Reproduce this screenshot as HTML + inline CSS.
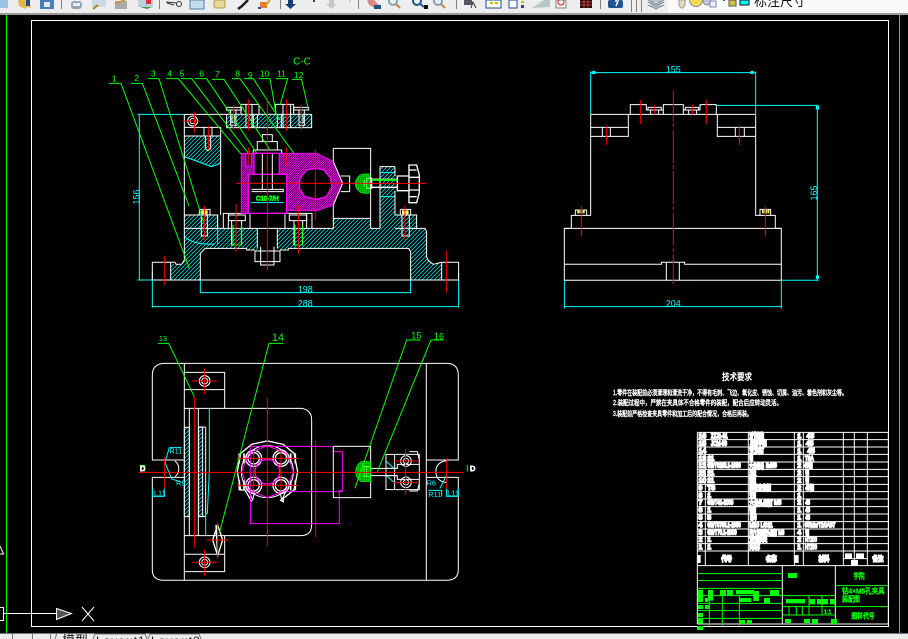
<!DOCTYPE html>
<html><head><meta charset="utf-8"><style>
html,body{margin:0;padding:0;background:#000;width:908px;height:639px;overflow:hidden}
svg{display:block}
text{font-family:"Liberation Sans","Noto Sans CJK SC",sans-serif}
</style></head><body>
<svg width="908" height="639" viewBox="0 0 908 639" xmlns="http://www.w3.org/2000/svg">
<defs>
<pattern id="h" width="12" height="12" patternUnits="userSpaceOnUse"><path d="M0 12L12 0M-3 3L3 -3M9 15L15 9" stroke="#0ff" stroke-width="2"/></pattern>
<pattern id="m" width="7" height="7" patternUnits="userSpaceOnUse"><rect width="7" height="7" fill="#000"/><path d="M0 7L7 0M-2 2L2 -2M5 9L9 5" stroke="#f0f" stroke-width="3"/></pattern>
<pattern id="g" width="6" height="6" patternUnits="userSpaceOnUse"><path d="M0 6L6 0M0 0L6 6" stroke="#0f0" stroke-width="2"/></pattern>
</defs>
<rect width="908" height="639" fill="#000"/>

<!-- toolbar -->
<rect width="908" height="13" fill="#eeeeee"/>
<rect y="13" width="908" height="2" fill="#9a9a9a"/>
<rect x="668" y="0" width="240" height="13" fill="#fafafa"/>
<g fill="none" stroke="#808080">
<path d="M61.500 0V9M159.500 0V9M280.500 0V9M358.500 0V9M456.500 0V9M600.500 0V9M631.500 0V12M636.500 0V12M641.500 0V12"/>
</g>
<rect x="0" y="0" width="8" height="8" fill="#9cc3e0"/>
<path d="M18 0h11l2 8-4-1-2 2-6-3z" fill="#e3b64f"/><path d="M26 0h4v6h-4z" fill="#1f4f8e"/>
<rect x="40" y="0" width="14" height="9" fill="#4a7fb5"/><rect x="44" y="2" width="6" height="5" fill="#dfeaf4"/>
<rect x="71" y="1" width="11" height="8" rx="3" fill="#90a4b8"/><rect x="73" y="3" width="7" height="3" fill="#eee"/>
<rect x="92" y="0" width="14" height="7" fill="#c9d9e6"/><path d="M93 9l5-4" stroke="#b57a2a" stroke-width="2"/>
<rect x="115" y="1" width="12" height="8" fill="#aaa"/><path d="M115 4l10-4" stroke="#c99a3a" stroke-width="2"/>
<rect x="138" y="0" width="15" height="7" fill="#b9cfe0"/><path d="M140 7l7 2 5-2" fill="#3d9a45"/><rect x="146" y="0" width="5" height="4" fill="#d33"/>
<path d="M166 2l11 1M167 3l7 2" stroke="#333" fill="none"/><circle cx="179" cy="4" r="2.500" fill="none" stroke="#334"/>
<rect x="190" y="0" width="14" height="9" fill="#c5dcef" stroke="#4a7fb5"/>
<rect x="214" y="0" width="11" height="8" rx="2" fill="#e9d9a0" stroke="#b8963a"/>
<path d="M238 9l4-3 6-6" stroke="#222" stroke-width="2.500" fill="none"/>
<rect x="260" y="2" width="7" height="6" fill="#f07a30"/><rect x="258" y="7" width="3" height="2" fill="#1c4fb8"/><path d="M266 5l4-5" stroke="#c9a832" stroke-width="2"/>
<path d="M288 0h5v4h3l-5.500 5-5.500-5h3z" fill="#143f78"/><rect x="313" y="0" width="2" height="2" fill="#143f78"/>
<path d="M329 0h5v4h3l-5.500 5-5.500-5h3z" fill="#c8c8c8"/><rect x="349" y="0" width="2" height="2" fill="#ccc"/>
<path d="M367 0h7l5 5-4 3-6-3z" fill="#d98a8a"/><rect x="374" y="5" width="7" height="4" fill="#1f5590"/>
<g fill="none" stroke-width="2"><circle cx="393" cy="1" r="4" stroke="#7da5c4"/><path d="M396 4l4 4" stroke="#c58a3a"/><circle cx="417" cy="1" r="4" stroke="#1f5590"/><path d="M420 4l4 3" stroke="#1f5590"/><circle cx="438" cy="1" r="4" stroke="#7da5c4"/><path d="M441 4l4 4" stroke="#c58a3a"/></g>
<rect x="424" y="5" width="4" height="4" fill="#111"/>
<rect x="464" y="0" width="8" height="5" fill="#556"/><path d="M471 8l2-6 3 6" fill="none" stroke="#334"/>
<rect x="486" y="0" width="15" height="8" fill="#fff" stroke="#1f4f8e"/><rect x="490" y="2" width="3" height="2" fill="#d8b400"/><rect x="495" y="2" width="3" height="2" fill="#d8b400"/>
<rect x="509" y="0" width="8" height="8" fill="#fff" stroke="#1f4f8e"/><rect x="521" y="1" width="3" height="2" fill="#d8b400"/><rect x="521" y="5" width="3" height="3" fill="#1f4f8e"/>
<path d="M532 8l12-8h6v7z" fill="#b8c6c8"/>
<rect x="556" y="0" width="10" height="8" fill="#eee" stroke="#888"/><circle cx="561" cy="2" r="3" fill="none" stroke="#d22"/>
<rect x="580" y="0" width="12" height="8" fill="#111"/><path d="M580 2h12M580 5h12M584 0v8M588 0v8" stroke="#d33"/>
<rect x="608" y="0" width="15" height="8" rx="2" fill="#1f5590"/><path d="M615 1h3l-2 5" stroke="#fff" fill="none" stroke-width="1.500"/>
<path d="M648 2l8 4 8-4M648 5l8 4 8-4M648 0l8-2 8 2-8 4z" fill="#b5c2cc" stroke="#7f8f9c"/>
<path d="M679 0v5l2 3h2l2-3V0z" fill="#e0dfb8" stroke="#999"/>
<circle cx="696" cy="0" r="6.500" fill="#f4dc50" stroke="#7d8ea8"/>
<circle cx="707" cy="1" r="4" fill="#b9c8d8" stroke="#888"/><rect x="710" y="1" width="6" height="6" fill="#eef" stroke="#7d8ea8"/>
<rect x="729" y="0" width="7" height="6" fill="#d2c23a" stroke="#555"/><rect x="723" y="0" width="2" height="1" fill="#555"/>
<rect x="740" y="0" width="9" height="5" fill="#0ff" stroke="#111"/>
<text x="754" y="6" font-size="13" fill="#111">标注尺寸</text>

<!-- model space edges -->
<path d="M6.500 15V633M899.500 15V633" stroke="#0f0"/>
<rect x="31.500" y="20.500" width="857" height="606" fill="none" stroke="#fff"/>

<!-- UCS -->
<g fill="none" stroke="#fff">
<path d="M0 554l3.500 0-3.500-8" />
<path d="M0 607.500h3.500v13H0M4 613.500h53"/>
<path d="M56.500 608.500l15 5-15 6z" fill="#555"/>
<path d="M82 621l12-14M82 607l12 14"/>
</g>

<!-- FRONT VIEW -->
<g transform="translate(100 50) scale(.3333)" fill="none" stroke-width="3" stroke="#fff">
<path d="M212 690V642L228 643H245L253 630V535H472V600H440V595H315L301 610V690Z" fill="url(#h)" stroke="none"/>
<path d="M532 535H700V505H812V535H840V350H885V495H950V535H975L980 545V620L1000 643L1025 637V690H932V605L925 595H565V600H532Z" fill="url(#h)" stroke="none"/>
<rect x="812" y="350" width="28" height="185" fill="#000" stroke="none"/>
<path d="M253 495H353V535H253ZM253 258H362V340L335 350L253 320ZM380 193H635V232H380Z" fill="url(#h)" stroke="none"/>
<rect x="886" y="480" width="70" height="15" fill="#000" stroke="none"/>
<!-- cyan bits -->
<g stroke="#0ff">
<path d="M253 320L335 350L362 340M253 560C270 575 300 585 345 582M353 495V582M842 368H885M842 440H885"/>
<path d="M112 193H253M112 690H212M118 193V690M301 690V730M932 690V730M301 728H932M157 665V773M1076 665V773M157 770H1076"/>
<path d="M460 458H552"/>
</g>
<g fill="#0ff" stroke="none" font-size="27" text-anchor="middle">
<text x="616" y="727">198</text><text x="616" y="769">288</text>
<text transform="translate(118 441) rotate(-90)">156</text>
</g>
<!-- white outlines -->
<path d="M157 690V637H225L228 643H245L253 630V535H700V505H812V535H840M885 535H975L980 545V620L985 632L1000 643L1025 637H1076V690H157M212 637V690M1025 637V690"/>
<path d="M301 690V610L315 595H440V600H465M540 600H565V595H925L932 605V690"/>
<path d="M253 193V535M362 232V495M253 193H380M253 232H362M253 258H362M253 495H353V535M885 495H950V535"/>
<path d="M700 295H812V505M700 295V505M722 378H749V425H722M840 350V535M885 350V378M885 422V495M840 350H885"/>
<circle cx="278" cy="213" r="15"/><circle cx="278" cy="213" r="8"/>
<path d="M312 232V258M336 232V258M316 258V296L324 302L332 296V258"/>
<rect x="380" y="193" width="255" height="40"/>
<path d="M423 193V163H477V193M438 163V233M456 163V233M527 193V163H581V193M549 163V233M572 163V233M460 193V233M472 193V233M532 193V233M544 193V233"/>
<path d="M379 172H424V180H379ZM581 172H626V180H581ZM392 180V226H408V180M597 180V226H613V180M396 198H404V218H396ZM601 198H609V218H601"/>
<path d="M487 275V254H517V275M472 300V275H532V300M460 310V300H545V310M487 310V420M517 310V420M455 418H550V425H455"/>
<path d="M370 535V490H450V535M555 535V490H636V535M385 490V535M620 490V535M450 490V535M472 535V595M532 535V595M555 490V535"/>
<path d="M465 603H540V635H465ZM482 590V645H522V590"/>
<path d="M386 495H436V512H386ZM568 495H620V512H568ZM395 512V585H425V512M582 512V585H608V512"/>
<path d="M298 478H330V495M298 478V495M304 495V558H322V495M901 478H932V495M901 478V495M906 495V558H928V495"/>
<rect x="303" y="481" width="20" height="12" fill="#ff6" stroke="none"/><rect x="906" y="481" width="20" height="12" fill="#ff6" stroke="none"/>
<path d="M892 378H927V422H892ZM927 345H950L958 375V428L950 458H927ZM927 360H950M927 382H958M927 420H958M927 440H950M815 388H892M815 412H892M800 385H815V415H800ZM793 390V410" stroke-width="4"/>
<!-- green -->
<path d="M795 372A28 28 0 0 0 795 430H808V372Z" fill="url(#g)" stroke="#0f0" stroke-width="2"/>
<g stroke="#0f0">
<path d="M815 390H892" stroke-width="5"/>
<path d="M27 100H63L268 655M93 100H127L267 468M144 86H177L313 525M198 86H235L430 320M243 86H275L510 395M285 86H320L545 420M336 88H372L510 300M396 86H420L600 335M432 86H460L540 210M477 86H510L528 190M528 86H563L540 165M576 88H605L625 178"/>
<path d="M399 525V585M424 525V585M585 525V585M607 525V585M398 585H424M583 585H607"/>
</g>
<g fill="#0f0" stroke="none" font-size="26" text-anchor="middle">
<text x="606" y="44" font-size="30">C-C</text>
<text x="43" y="95">1</text><text x="110" y="93">2</text><text x="160" y="80">3</text><text x="209" y="80">4</text><text x="246" y="80">5</text><text x="305" y="80">6</text><text x="352" y="81">7</text><text x="413" y="80">8</text><text x="451" y="84">9</text><text x="494" y="80">10</text><text x="544" y="80">11</text><text x="596" y="84">12</text>
</g>
<!-- magenta part -->
<path d="M424 310H650L700 335L728 400L700 465L650 482H555V490H424Z" fill="url(#m)" stroke="#f0f"/>
<path d="M646 355L672 360L692 385L696 410L680 440L650 448L615 440L598 415L600 385L620 360Z" fill="#000" stroke="#f0f" stroke-width="4"/>
<rect x="445" y="373" width="115" height="117" fill="#000" stroke="#f0f" stroke-width="4"/>
<rect x="462" y="310" width="76" height="63" fill="#000" stroke="#f0f" stroke-width="4"/>
<rect x="438" y="310" width="16" height="38" fill="#000" stroke="#f0f" stroke-width="3"/>
<path d="M487 312V373M517 312V373M487 373V420M517 373V420M455 418H550V425H455"/>
<path d="M452 458H552" stroke="#0ff"/>
<text x="502" y="451" font-size="20" fill="#0f0" stroke="#0f0" text-anchor="middle" textLength="68" lengthAdjust="spacingAndGlyphs">C10-7/H</text>
<path d="M700 335L728 400L700 465" stroke="#fff"/>
<!-- red -->
<g stroke="#f00">
<path d="M193 617V705M1039 603V728M502 145V660M408 400H980M646 300V510M283 187V248M247 213H300M325 228V300M313 468V570M408 462V605M595 465V612M915 465V570M445 148V242M559 148V242M401 165V240M604 165V240M445 292V345M559 292V345"/>
</g>
</g>

<!-- SIDE VIEW -->
<g transform="translate(540 50) scale(.3333)" fill="none" stroke-width="3" stroke="#fff">
<path d="M152 193H647M152 193V496H94V535H73V691H724V535H706V496H647V193"/>
<path d="M73 535H724M73 643H364V637H434V643H724M379 637V691M418 637V691"/>
<path d="M265 193V259H152M152 232H265M187 232V259M211 232V259M532 193V259H647M532 232H647M586 232V259M613 232V259"/>
<path d="M271 193V164H319V180H370V164H430V193M430 180H480V164H529V193M324 172H364V180H324ZM436 172H476V180H436ZM332 180V193M356 180V193M446 180V193M470 180V193M370 164V193" />
<path d="M106 496V480H140V496M660 496V478H692V496"/>
<rect x="112" y="479" width="22" height="11" fill="#ff6" stroke="none"/><rect x="666" y="479" width="22" height="11" fill="#ff6" stroke="none"/>
<path d="M120 479V490M128 479V490M672 479V490M682 479V490" stroke="#666"/>
<g stroke="#0ff">
<path d="M152 68H647M152 64V193M647 64V202M528 166H836M832 166V691M724 691H836M73 691V776M724 691V776M73 770H724"/>
<path d="M158 64h7v7h-7zM633 64h7v7h-7zM829 170h7v7h-7zM829 678h7v7h-7z" fill="#0ff"/>
</g>
<g fill="#0ff" stroke="none" font-size="27" text-anchor="middle">
<text x="400" y="67">155</text><text x="400" y="769">204</text>
<text transform="translate(831 429) rotate(-90)">165</text>
</g>
<g stroke="#f00">
<path d="M400 123V213M400 219V231M400 240V340M400 345V357M400 363V462M400 468V480M400 489V585M400 594V606M400 612V702M301 150V222M499 150V222M343 165V193M457 165V193M199 228V285M598 228V285M124 468V558M676 468V558"/>
</g>
</g>

<!-- TOP VIEW -->
<g transform="translate(130 325) scale(.3333)" fill="none" stroke-width="3" stroke="#fff">
<path d="M163 405H67V150Q67 118 100 115H955Q985 118 985 150V405H889M889 457H985V735Q985 765 950 766H100Q67 765 67 735V457H163"/>
<path d="M163 115V766M889 115V766"/>
<path d="M163 142H284V250M163 194H284M163 740H284V632M163 688H284"/>
<path d="M163 250H515Q545 255 545 285V600Q545 630 515 632H163"/>
<path d="M178 250V632M205 250V632M227 306V574M206 306H227M206 574H227"/>
<rect x="163" y="307" width="15" height="268" fill="url(#h)" stroke="#fff"/>
<rect x="206" y="307" width="12" height="268" fill="url(#h)" stroke="#fff"/>
<path d="M238 250V440L232 565H227V632" stroke="#0ff"/>
<circle cx="224" cy="168" r="16"/><circle cx="224" cy="168" r="9"/><circle cx="224" cy="712" r="16"/><circle cx="224" cy="712" r="9"/>
<path d="M135 408A30 30 0 0 1 135 455M918 440A30 30 0 0 1 950 408M918 440A30 30 0 0 0 950 472"/>
<path d="M263 600L248 645L263 692L278 645ZM258 600L263 692" stroke-width="4"/>
<!-- central flange -->
<path d="M322 440L332 385L365 358L412 348L460 358L492 385L503 440L492 495L460 520V530L450 525M365 530L345 495H332L322 440" stroke-width="4"/>
<circle cx="412" cy="440" r="78"/>
<g stroke-width="4"><circle cx="371" cy="400" r="17"/><circle cx="453" cy="400" r="17"/><circle cx="371" cy="481" r="17"/><circle cx="453" cy="481" r="17"/><circle cx="371" cy="400" r="24"/><circle cx="453" cy="400" r="24"/><circle cx="371" cy="481" r="24"/><circle cx="453" cy="481" r="24"/></g>
<g stroke-width="5"><path d="M328 385V415M342 385V415M482 385V415M496 385V415M328 466V496M342 466V496M482 466V496M496 466V496"/></g>
<path d="M355 495L368 525L374 500M470 495L455 525L450 500" stroke-width="3"/>
<g stroke="#f0f" stroke-width="3">
<path d="M361 364H610V380H637V497H628V596H361ZM405 364H628M470 500H637"/>
<path d="M412 362L470 385L490 440L470 495L412 518L355 495L335 440L355 385Z"/>
<circle cx="412" cy="440" r="37" stroke-width="4"/>
</g>
<rect x="610" y="364" width="112" height="154"/>
<path d="M722 430H800M722 452H800M702 425H722V455H702ZM710 425V455"/>
<path d="M694 410A35 35 0 0 0 694 470H722V410Z" fill="url(#g)" stroke="#0f0" stroke-width="2"/>
<path d="M768 388H868V494H768ZM794 388V494M768 430H802V418H868M768 452H802V463H868M838 380H862L868 405V475L862 498H838"/>
<circle cx="828" cy="408" r="16"/><circle cx="828" cy="408" r="8"/><circle cx="828" cy="472" r="16"/><circle cx="828" cy="472" r="8"/>
<path d="M770 410L792 430M770 452L792 472" stroke="#0ff"/>
<g stroke="#0f0">
<path d="M84 55H116L193 215M417 55H460M417 55L268 625M830 45H872M830 45L675 490M903 45H940M903 45L742 440"/>
</g>
<g fill="#0f0" stroke="none" text-anchor="middle">
<text x="99" y="48" font-size="22">13</text><text x="444" y="48" font-size="32">14</text><text x="859" y="40" font-size="27">15</text><text x="927" y="44" font-size="27">16</text>
</g>
<g stroke="#0ff">
<path d="M118 368H155M118 368L105 412L125 462L150 470M68 490V514H103V490M985 490V514H950V490M930 490L950 450M895 496H935V514"/>
</g>
<g fill="#0ff" stroke="none" font-size="22">
<text x="118" y="385">R11</text><text x="138" y="482">R6</text><text x="72" y="512">L11</text><text x="890" y="482">R6</text><text x="895" y="516">R11</text><text x="952" y="512">L11</text>
</g>
<path d="M29 421H44V440M1012 420V440" stroke="#0f0"/>
<text x="30" y="438" fill="#0f0" font-size="22">D</text><text x="1020" y="438" fill="#0f0" font-size="22">D</text>
<g stroke="#f00">
<path d="M25 442H1002M193 215V668M412 220V662M557 348V636M104 395V490M950 400V490M223 132V207M186 168H262M223 675V752M186 712H262M263 595V700M230 645H296"/>
<path d="M371 378V500M453 378V500M320 400H505M320 481H505M827 372V508M790 408H865M790 472H865" />
</g>
</g>

<!-- TECH TEXT -->
<g fill="#fff" stroke="#fff" stroke-width=".4">
<text x="722" y="380" font-size="9" textLength="30" lengthAdjust="spacingAndGlyphs">技术要求</text>
<text x="613" y="395" font-size="7" textLength="234" lengthAdjust="spacingAndGlyphs">1.零件在装配前必须清理和清洗干净，不得有毛刺、飞边、氧化皮、锈蚀、切屑、油污、着色剂和灰尘等。</text>
<text x="613" y="405" font-size="7" textLength="169" lengthAdjust="spacingAndGlyphs">2.装配过程中，严禁在夹具体不合格零件的装配，配合后应转动灵活。</text>
<text x="613" y="416" font-size="7" textLength="139" lengthAdjust="spacingAndGlyphs">3.装配前严格检查夹具零件和加工后的配合情况，合格后再装。</text>
</g>

<!-- PARTS TABLE -->
<g transform="translate(690 425) scale(.3333)" fill="none" stroke="#fff" stroke-width="3">
<path d="M22 22H595M22 44H595M22 66H595M22 88H595M22 111H595M22 133H595M22 155H595M22 178H595M22 200H595M22 222H595M22 245H595M22 267H595M22 290H595M22 312H595M22 334H595M22 356H595M22 378H595M22 422H595"/>
<path d="M22 22V597M46 22V422M175 22V422M313 22V422M340 22V422M460 22V422M493 22V422M532 22V422M595 22V597M22 597H595"/>
<path d="M277 422V597M436 422V597"/>
<g fill="#fff" stroke="#fff" stroke-width="5" font-size="20">
<text x="26" y="39">16</text><text x="63" y="39" textLength="50" lengthAdjust="spacingAndGlyphs">ZZJ1-81</text><text x="178" y="39" textLength="44" lengthAdjust="spacingAndGlyphs">活节螺栓</text><text x="322" y="39">1</text><text x="350" y="39">45</text>
<text x="26" y="61">15</text><text x="63" y="61" textLength="48" lengthAdjust="spacingAndGlyphs">JCM-59</text><text x="180" y="61" textLength="50" lengthAdjust="spacingAndGlyphs">星形手把</text><text x="322" y="61">1</text><text x="348" y="61">45</text>
<text x="26" y="84">14</text><text x="178" y="84" textLength="44" lengthAdjust="spacingAndGlyphs">支承钉</text><text x="322" y="84">1</text><text x="352" y="84">45</text>
<text x="26" y="106">13</text><text x="52" y="106">11</text><text x="178" y="106" textLength="11" lengthAdjust="spacingAndGlyphs">销</text><text x="322" y="106">1</text><text x="345" y="106" textLength="26" lengthAdjust="spacingAndGlyphs">T8A</text>
<text x="26" y="128">12</text><text x="52" y="128" textLength="100" lengthAdjust="spacingAndGlyphs">GB/T6183.1-1986</text><text x="178" y="130" textLength="44" lengthAdjust="spacingAndGlyphs">六角螺母</text><text x="228" y="128" textLength="32" lengthAdjust="spacingAndGlyphs">M6</text><text x="322" y="128">2</text><text x="342" y="128" textLength="26" lengthAdjust="spacingAndGlyphs">45钢</text>
<text x="26" y="150">11</text><text x="52" y="150">11</text><text x="178" y="150" textLength="21" lengthAdjust="spacingAndGlyphs">压板</text><text x="322" y="150">2</text><text x="346" y="150" textLength="11" lengthAdjust="spacingAndGlyphs">钢</text>
<text x="26" y="172">10</text><text x="52" y="172">11</text><text x="178" y="172" textLength="20" lengthAdjust="spacingAndGlyphs">垫圈</text><text x="322" y="172">2</text><text x="346" y="172" textLength="11" lengthAdjust="spacingAndGlyphs">钢</text>
<text x="26" y="195">9</text><text x="52" y="195">T8</text><text x="178" y="195" textLength="65" lengthAdjust="spacingAndGlyphs">弹簧定位销</text><text x="322" y="195">2</text><text x="346" y="195" textLength="26" lengthAdjust="spacingAndGlyphs">45钢</text>
<text x="26" y="217">8</text><text x="52" y="217">1</text><text x="178" y="217" textLength="20" lengthAdjust="spacingAndGlyphs">支座</text><text x="322" y="217">1</text>
<text x="26" y="239">7</text><text x="52" y="239" textLength="78" lengthAdjust="spacingAndGlyphs">GB/T41-2000</text><text x="178" y="241" textLength="70" lengthAdjust="spacingAndGlyphs">六角头螺钉</text><text x="252" y="239" textLength="22" lengthAdjust="spacingAndGlyphs">M8</text><text x="322" y="239">2</text><text x="346" y="239" textLength="14" lengthAdjust="spacingAndGlyphs">45</text>
<text x="26" y="261">6</text><text x="52" y="261">1</text><text x="178" y="261" textLength="20" lengthAdjust="spacingAndGlyphs">钻套</text><text x="322" y="261">1</text><text x="346" y="261" textLength="14" lengthAdjust="spacingAndGlyphs">45</text>
<text x="26" y="284">5</text><text x="52" y="284">5</text><text x="180" y="284" textLength="20" lengthAdjust="spacingAndGlyphs">螺母</text><text x="322" y="284">1</text><text x="346" y="284" textLength="14" lengthAdjust="spacingAndGlyphs">45</text>
<text x="26" y="306">4</text><text x="52" y="306" textLength="100" lengthAdjust="spacingAndGlyphs">GB/T5783.1-1986</text><text x="178" y="306" textLength="70" lengthAdjust="spacingAndGlyphs">M10 LG11</text><text x="322" y="306">1</text><text x="344" y="306" textLength="92" lengthAdjust="spacingAndGlyphs">65Mn/T10A57</text>
<text x="26" y="328">3</text><text x="52" y="328" textLength="88" lengthAdjust="spacingAndGlyphs">GB/T70.1-2000</text><text x="178" y="330" textLength="84" lengthAdjust="spacingAndGlyphs">内六角圆柱头螺钉</text><text x="265" y="328" textLength="18" lengthAdjust="spacingAndGlyphs">M8</text><text x="322" y="328">4</text><text x="346" y="330" textLength="11" lengthAdjust="spacingAndGlyphs">钢</text>
<text x="26" y="350">2</text><text x="52" y="350">1</text><text x="178" y="350" textLength="53" lengthAdjust="spacingAndGlyphs">定向块</text><text x="322" y="350">2</text><text x="345" y="350" textLength="36" lengthAdjust="spacingAndGlyphs">HT200</text>
<text x="26" y="372">1</text><text x="52" y="372">1</text><text x="178" y="372" textLength="32" lengthAdjust="spacingAndGlyphs">夹具体</text><text x="322" y="372">1</text><text x="345" y="372" textLength="36" lengthAdjust="spacingAndGlyphs">HT200</text>
<text x="94" y="408" textLength="32" lengthAdjust="spacingAndGlyphs">代号</text><text x="228" y="408" textLength="32" lengthAdjust="spacingAndGlyphs">名称</text><text x="386" y="408" textLength="32" lengthAdjust="spacingAndGlyphs">材料</text><text x="548" y="408" textLength="32" lengthAdjust="spacingAndGlyphs">备注</text>
</g>
<path d="M23 390H32V414H23ZM314 390H326V414H314ZM465 385H486V400H465ZM498 385H522V400H498ZM483 405H504V421H483Z" fill="#fff" stroke="none"/>
<path d="M460 401H532"/>
</g>

<!-- TITLE BLOCK -->
<g transform="translate(690 560) scale(.3333)" stroke="#0f0" stroke-width="3" fill="none">
<path d="M24 41H277M24 62H277M24 85H277M24 107H277M24 130H277M24 152H277M24 175H277"/>
<path d="M58 107V197M97 107V197M148 107V197M277 107H436M277 140H436M277 165H436M357 107V165M396 107V165M297 140V165M319 140V165M337 140V165M436 77H595M436 140H595"/>
<g fill="#0f0" stroke="none">
<rect x="294" y="39" width="27" height="15"/><rect x="24" y="90" width="15" height="36"/><rect x="54" y="90" width="15" height="32"/><rect x="45" y="114" width="9" height="12"/><rect x="90" y="90" width="18" height="16"/><rect x="111" y="90" width="18" height="16"/><rect x="138" y="90" width="54" height="13"/><rect x="190" y="93" width="17" height="30"/><rect x="148" y="114" width="36" height="12"/><rect x="222" y="114" width="18" height="18"/><rect x="240" y="90" width="27" height="16"/>
<rect x="288" y="117" width="57" height="13"/><rect x="359" y="117" width="16" height="16"/><rect x="381" y="117" width="33" height="16"/><rect x="420" y="117" width="16" height="16"/>
<rect x="24" y="135" width="16" height="12"/><rect x="45" y="135" width="12" height="12"/><rect x="24" y="159" width="15" height="12"/><rect x="24" y="176" width="15" height="15"/><rect x="148" y="180" width="17" height="12"/><rect x="171" y="180" width="15" height="12"/><rect x="285" y="177" width="18" height="12"/><rect x="342" y="177" width="18" height="12"/><rect x="366" y="177" width="18" height="15"/><rect x="423" y="177" width="18" height="15"/><rect x="21" y="198" width="18" height="12"/>
</g>
<g fill="#0f0" stroke="#0f0" stroke-width="1.500" font-size="22">
<text x="490" y="55" textLength="34" lengthAdjust="spacingAndGlyphs">学院</text>
<text x="456" y="100" textLength="128" lengthAdjust="spacingAndGlyphs">钻4×M8孔夹具</text>
<text x="456" y="124" textLength="54" lengthAdjust="spacingAndGlyphs">装配图</text>
<text x="484" y="175" textLength="70" lengthAdjust="spacingAndGlyphs">图样代号</text>
<text x="402" y="160" font-size="16">1:1</text>
</g>
</g>

<!-- bottom tabs -->
<rect x="0" y="633.500" width="908" height="6" fill="#ececec"/>
<g fill="none" stroke="#777">
<path d="M12.500 634V639M32.500 634V639M50.500 634V639M55 639L57 633M93 639L95 634H145L147 639M148 639L150 634H199L201 639"/>
</g>
<text x="62" y="645" font-size="13" fill="#222">模型</text>
<text x="96" y="645" font-size="12" fill="#222" letter-spacing="1">Layout1</text>
<text x="151" y="645" font-size="12" fill="#222" letter-spacing="1">Layout2</text>
</svg>
</body></html>
